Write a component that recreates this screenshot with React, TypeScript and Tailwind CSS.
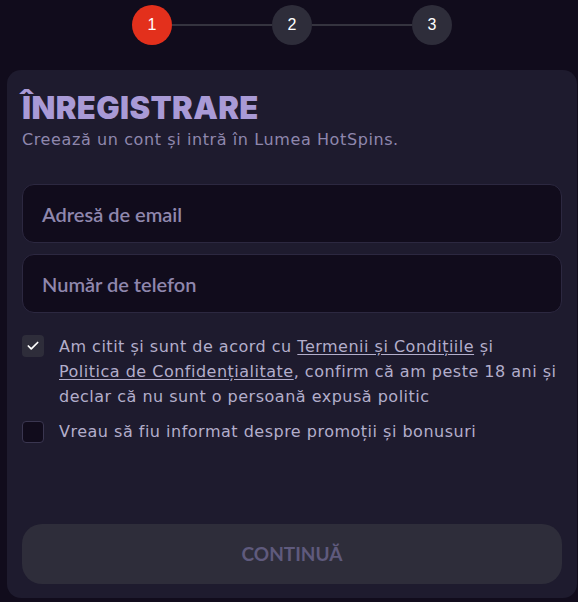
import { Check } from "lucide-react"

const steps = [1, 2, 3]

export default function App() {
  return (
    <div className="min-h-screen w-[578px] bg-[#110c1c] pt-[5px]" style={{ fontFamily: "'DejaVu Sans', sans-serif" }}>
      {/* Stepper */}
      <div className="flex items-center justify-center pl-[6px]">
        {steps.map((s, i) => (
          <div key={s} className="flex items-center">
            {i > 0 && <div className="h-[2px] w-[100px] bg-[#35343f]" />}
            <div
              className={`flex h-10 w-10 items-center justify-center rounded-full text-[16px] font-medium text-white ${
                s === 1 ? "bg-[#e3301c]" : "bg-[#2e2d3a]"
              }`}
              style={{ fontFamily: "'Liberation Sans', sans-serif" }}
            >
              {s}
            </div>
          </div>
        ))}
      </div>

      {/* Card */}
      <div className="ml-[7px] mr-[1px] mt-[25px] flex h-[528px] flex-col rounded-[14px] bg-[#1e1b2e] px-[15px] pb-[14px] pt-[20px]">
        <h1
          className="text-[31px] font-black leading-[36px] tracking-[0.4px] text-[#a99ad6]"
          style={{ fontFamily: "Inter, sans-serif" }}
        >
          ÎNREGISTRARE
        </h1>
        <p className="mt-[3px] text-[16px] leading-[22px] tracking-[0.6px] text-[#8f87ad]">
          Creează un cont și intră în Lumea HotSpins.
        </p>

        <div className="mt-[33px] flex flex-col gap-[11px]">
          {["Adresă de email", "Număr de telefon"].map((p) => (
            <div
              key={p}
              className="flex h-[59px] items-center rounded-[12px] border border-[#2c2840] bg-[#110c1c] px-[19px] text-[20px] font-semibold text-[#8f87ad]"
              style={{ fontFamily: "Lato, sans-serif" }}
            >
              {p}
            </div>
          ))}
        </div>

        <div className="mt-[21px] flex gap-[15px]">
          <div className="mt-[1px] flex h-[22px] w-[22px] shrink-0 items-center justify-center rounded-[4px] bg-[#2e2d3a]">
            <Check className="h-[14px] w-[14px] text-white" strokeWidth={3} />
          </div>
          <p className="mr-[-6px] text-[16px] leading-[25px] tracking-[0.5px] text-[#b3aecb]">
            Am citit și sunt de acord cu <span className="underline underline-offset-2">Termenii și Condițiile</span> și
            <br />
            <span className="underline underline-offset-2">Politica de Confidențialitate</span>, confirm că am peste 18 ani și
            <br />
            declar că nu sunt o persoană expusă politic
          </p>
        </div>

        <div className="mt-[10px] flex items-center gap-[15px]">
          <div className="h-[22px] w-[22px] shrink-0 rounded-[4px] border border-[#3a3650] bg-[#110c1c]" />
          <p className="text-[16px] leading-[25px] tracking-[0.5px] text-[#b3aecb]">
            Vreau să fiu informat despre promoții și bonusuri
          </p>
        </div>

        <button
          className="mt-auto flex h-[60px] w-full items-center justify-center rounded-[20px] bg-[#2e2d3a] text-[19px] font-bold text-[#5f5a7d]"
          style={{ fontFamily: "Lato, sans-serif" }}
        >
          CONTINUĂ
        </button>
      </div>
    </div>
  )
}
